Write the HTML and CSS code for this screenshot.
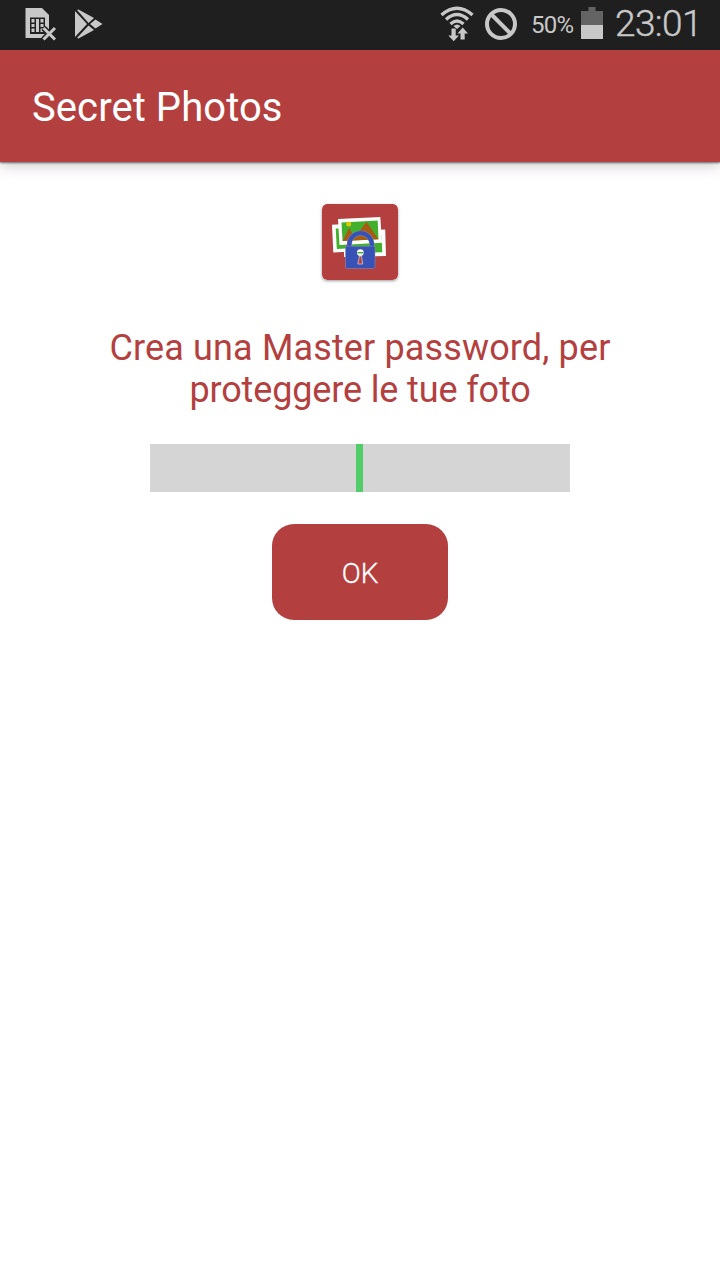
FILE: index.html
```html
<!DOCTYPE html>
<html lang="it">
<head>
    <meta charset="UTF-8">
    <meta name="viewport" content="width=device-width, initial-scale=1.0">
    <title>Secret Photos</title>
    <link rel="stylesheet" href="styles.css">
</head>
<body>
    <div class="status-bar">
        <div class="status-left">
            <!-- SIM -->
            <svg class="icon-sim" width="32" height="34" viewBox="0 0 32 34">
                <path d="M.5 0H17L24 7V30H.5Z" fill="#c8c8c8"/>
                <path d="M5 9.500H20V26H5Z" fill="#202020"/>
                <path d="M6.500 11h3v3.500h-3zM6.500 16h3v3h-3zM6.500 20.500h3v3.500h-3zM11 11h3v13h-3zM15.500 11h3v3.500h-3zM15.500 16h3v3h-3zM15.500 20.500h3v3.500h-3z" fill="#c8c8c8"/>
                <path d="M18.500 20L30 31.500M30 20L18.500 31.500" stroke="#202020" stroke-width="6"/>
                <path d="M18.500 20L30 31.500M30 20L18.500 31.500" stroke="#c8c8c8" stroke-width="3"/>
            </svg>
            <!-- Play Store -->
            <svg class="icon-play" width="28" height="30" viewBox="0 0 28 30">
                <path d="M0 2L12 15L0 28ZM2 1L3.500 .5L19 9L13.500 14ZM2 29L13.500 16.500L19 21L3.500 29.500ZM15 15L20.500 10.500L27.500 15L20.500 19.500Z" fill="#c8c8c8"/>
            </svg>
        </div>
        <div class="status-right">
            <!-- Wi-Fi -->
            <svg class="icon-wifi" width="34" height="36" viewBox="0 0 34 36">
                <g fill="none" stroke="#c8c8c8" stroke-width="3.300">
                    <path d="M1.500 9Q17-4.500 32.500 9"/>
                    <path d="M6 13.500Q17 3.500 28 13.500"/>
                    <path d="M10.500 18Q17 12 23.500 18"/>
                </g>
                <path d="M13.500 20Q17 17 20.500 20L17 23Z" fill="#c8c8c8"/>
                <path d="M11.500 22.500h4.200v7h3.300l-5.300 5.800l-5.300-5.800h3.100zM20.500 33.500h4.200v-6h3.300l-5.300-6l-5.200 6h3z" fill="#c8c8c8"/>
            </svg>
            <!-- no notifications -->
            <svg class="icon-block" width="32" height="32" viewBox="0 0 32 32">
                <circle cx="16" cy="16" r="14" fill="none" stroke="#c8c8c8" stroke-width="4"/>
                <path d="M6 6L26 26" stroke="#c8c8c8" stroke-width="4"/>
            </svg>
            <span class="battery-text">50%</span>
            <svg class="icon-battery" width="22" height="32" viewBox="0 0 22 32">
                <path d="M7.500 0h7v4H22v14H0V4h7.500z" fill="#646464"/>
                <path d="M0 18h22v14H0z" fill="#c8c8c8"/>
            </svg>
            <span class="clock">23:01</span>
        </div>
    </div>

    <header class="toolbar">
        <h1>Secret Photos</h1>
    </header>

    <main class="container">
        <svg class="logo" width="76" height="76" viewBox="0 0 76 76">
            <rect width="76" height="76" rx="5" fill="#b43f3f"/>
            <!-- back photos -->
            <path d="M10 20.700L24 20V47.800L11.300 48.500Z" fill="#fff"/>
            <path d="M50 26L63.200 25.500L64 52L22 53V46H50Z" fill="#fff"/>
            <path d="M13.700 24.500H24V44.500L14.800 45ZM30 33L59.500 31.500L60.300 48.300L30 49Z" fill="#43b02d"/>
            <!-- front photo -->
            <path d="M16 15L58.300 13L60 38.800L17.500 41Z" fill="#fff"/>
            <path d="M19.500 18.500L55.700 16.500L56.500 35.300L20.500 37Z" fill="#43b02d"/>
            <circle cx="26.700" cy="20" r="2.500" fill="#e0c800"/>
            <path d="M20.500 37L27 24L32 32L36 29L44.500 17.800L56.500 35.300Z" fill="#a85c12"/>
            <!-- padlock -->
            <path d="M27.300 44V40.500a11.300 11.300 0 0 1 22.600 0V44" fill="none" stroke="#8b93c0" stroke-width="5"/>
            <path d="M27.300 44V40.500a11.300 11.300 0 0 1 22.600 0V44" fill="none" stroke="#3851b5" stroke-width="4.200"/>
            <rect x="23.500" y="42.200" width="29.500" height="22.300" rx="1.500" fill="#3851b5" stroke="#8b93c0" stroke-width=".5"/>
            <circle cx="38.300" cy="48.700" r="3.400" fill="#fff"/>
            <path d="M35.500 48h5.600v1.500h-5.600z" fill="#43b02d"/>
            <path d="M37.500 52h1.800l1.500 8h-5z" fill="#b43f3f" stroke="#ddd" stroke-width=".7"/>
        </svg>

        <p class="message">
            <span class="line-wide">Crea una Master password, per</span>
            <span class="line-tight">proteggere le tue foto</span>
        </p>

        <div class="password-field"><span class="cursor"></span></div>

        <button class="ok-button">OK</button>
    </main>
</body>
</html>
```
FILE: styles.css
```css
body {
    font-family: Roboto, sans-serif;
    margin: 0;
    padding: 0;
    height: 100vh;
    background-color: #fff;
}

.status-bar {
    display: flex;
    justify-content: space-between;
    height: 50px;
    background-color: #1f1f1f;
    color: #c8c8c8;
}

.status-left, .status-right {
    display: flex;
    align-items: flex-start;
}

.status-left {
    padding-left: 25px;
}

.icon-sim {
    margin-top: 8px;
}

.icon-play {
    margin: 9px 0 0 18px;
}

.status-right {
    padding-right: 18px;
}

.icon-wifi {
    margin: 6px 11px 0 0;
}

.icon-block {
    margin: 8px 14px 0 0;
}

.battery-text {
    width: 44px;
    margin-right: 6px;
    font-size: 24px;
    line-height: 50px;
    letter-spacing: -0.8px;
}

.icon-battery {
    margin: 7px 12px 0 0;
}

.clock {
    width: 87px;
    font-size: 37px;
    font-weight: 300;
    line-height: 48px;
    letter-spacing: -0.6px;
    -webkit-text-stroke: 0.4px #c8c8c8;
}

/* keep the shadow below the bar only */
.toolbar {
    height: 112px;
    background-color: #b43f3f;
    box-shadow: 0 1px 2px rgba(0, 0, 0, 0.55), 0 3px 14px rgba(0, 0, 0, 0.22);
    clip-path: inset(0 0 -20px 0);
}

h1 {
    margin: 0;
    padding-left: 32px;
    font-size: 40px;
    font-weight: normal;
    line-height: 116px;
    letter-spacing: 0.08px;
    color: #fff;
}

.container {
    display: flex;
    flex-direction: column;
    align-items: center;
    padding-top: 42px;
}

.logo {
    border-radius: 5px;
    box-shadow: 0 1px 3px rgba(0, 0, 0, 0.4);
}

.message {
    width: 540px;
    margin: 47px 0 33px;
    font-size: 36px;
    line-height: 42px;
    text-align: center;
    color: #b43f3f;
}

.message span {
    display: block;
}

.line-wide {
    letter-spacing: 0.14px;
}

.line-tight {
    letter-spacing: -0.14px;
}

.password-field {
    display: flex;
    justify-content: center;
    width: 420px;
    height: 48px;
    background-color: #d5d5d5;
}

.cursor {
    width: 7px;
    margin-right: 1px;
    background-color: #50cd69;
}

.ok-button {
    width: 176px;
    height: 96px;
    margin-top: 32px;
    padding: 2px 0 0;
    border: none;
    border-radius: 22px;
    background-color: #b43f3f;
    font-family: inherit;
    font-size: 28px;
    font-weight: 300;
    -webkit-text-stroke: 0.3px #fff;
    color: #fff;
}
```
